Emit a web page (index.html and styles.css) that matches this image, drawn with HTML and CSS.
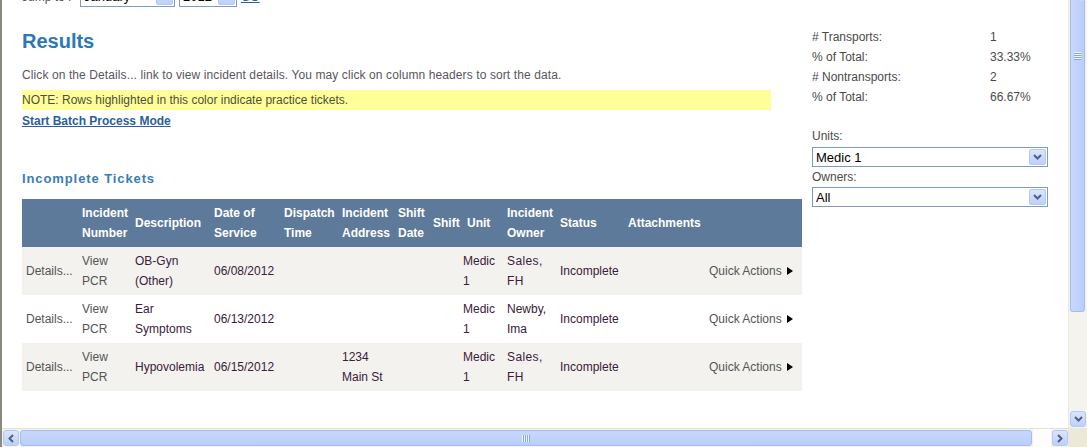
FILE: index.html
```html
<!DOCTYPE html>
<html>
    <head>
        <link rel="stylesheet" href="styles.css">
    </head>
    <body>
        <div class="window">
            <div class="viewport">
                <div class="page">
                    <div class="main">
                        <div class="jump">
                            <span class="jump-label">Jump to :</span>
                            <div class="select select-month">
                                <span class="select-text">January</span>
                                <span class="drop"><svg width="9" height="6" viewBox="0 0 9 6"><path d="M1 1 L4.5 4.5 L8 1" fill="none" stroke="#4d6185" stroke-width="2"/></svg></span>
                            </div>
                            <div class="select select-year">
                                <span class="select-text">2012</span>
                                <span class="drop"><svg width="9" height="6" viewBox="0 0 9 6"><path d="M1 1 L4.5 4.5 L8 1" fill="none" stroke="#4d6185" stroke-width="2"/></svg></span>
                            </div>
                            <a href="#" class="go">GO</a>
                        </div>

                        <h1 class="results-title">Results</h1>
                        <p class="hint">Click on the Details... link to view incident details. You may click on column headers to sort the data.</p>
                        <p class="note">NOTE: Rows highlighted in this color indicate practice tickets.</p>
                        <a href="#" class="batch-link">Start Batch Process Mode</a>

                        <h2 class="section-title">Incomplete Tickets</h2>
                        <table class="tickets">
                            <colgroup>
                                <col style="width: 58px">
                                <col style="width: 53px">
                                <col style="width: 79px">
                                <col style="width: 70px">
                                <col style="width: 58px">
                                <col style="width: 56px">
                                <col style="width: 35px">
                                <col style="width: 30px">
                                <col style="width: 44px">
                                <col style="width: 53px">
                                <col style="width: 68px">
                                <col style="width: 81px">
                                <col style="width: 95px">
                            </colgroup>
                            <thead>
                                <tr>
                                    <th></th>
                                    <th>Incident<br>Number</th>
                                    <th>Description</th>
                                    <th>Date of<br>Service</th>
                                    <th>Dispatch<br>Time</th>
                                    <th>Incident<br>Address</th>
                                    <th>Shift<br>Date</th>
                                    <th>Shift</th>
                                    <th class="unit-head">Unit</th>
                                    <th>Incident<br>Owner</th>
                                    <th>Status</th>
                                    <th>Attachments</th>
                                    <th></th>
                                </tr>
                            </thead>
                            <tbody>
                                <tr class="alt">
                                    <td class="muted first">Details...</td>
                                    <td class="muted">View<br>PCR</td>
                                    <td>OB-Gyn<br>(Other)</td>
                                    <td>06/08/2012</td>
                                    <td></td>
                                    <td></td>
                                    <td></td>
                                    <td></td>
                                    <td>Medic<br>1</td>
                                    <td class="owner">Sales,<br>FH</td>
                                    <td>Incomplete</td>
                                    <td></td>
                                    <td class="muted">Quick Actions <span class="arrow"></span></td>
                                </tr>
                                <tr>
                                    <td class="muted first">Details...</td>
                                    <td class="muted">View<br>PCR</td>
                                    <td>Ear<br>Symptoms</td>
                                    <td>06/13/2012</td>
                                    <td></td>
                                    <td></td>
                                    <td></td>
                                    <td></td>
                                    <td>Medic<br>1</td>
                                    <td>Newby,<br>Ima</td>
                                    <td>Incomplete</td>
                                    <td></td>
                                    <td class="muted">Quick Actions <span class="arrow"></span></td>
                                </tr>
                                <tr class="alt">
                                    <td class="muted first">Details...</td>
                                    <td class="muted">View<br>PCR</td>
                                    <td>Hypovolemia</td>
                                    <td>06/15/2012</td>
                                    <td></td>
                                    <td>1234<br>Main St</td>
                                    <td></td>
                                    <td></td>
                                    <td>Medic<br>1</td>
                                    <td class="owner">Sales,<br>FH</td>
                                    <td>Incomplete</td>
                                    <td></td>
                                    <td class="muted">Quick Actions <span class="arrow"></span></td>
                                </tr>
                            </tbody>
                        </table>
                    </div>

                    <div class="side">
                        <div class="stats stats-top">
                            <div class="stat-row"><span class="stat-label"># Runs:</span><span>3</span></div>
                        </div>
                        <div class="stats">
                            <div class="stat-row"><span class="stat-label"># Transports:</span><span>1</span></div>
                            <div class="stat-row"><span class="stat-label">% of Total:</span><span>33.33%</span></div>
                            <div class="stat-row"><span class="stat-label"># Nontransports:</span><span>2</span></div>
                            <div class="stat-row"><span class="stat-label">% of Total:</span><span>66.67%</span></div>
                        </div>

                        <div class="filter-label filter-first">Units:</div>
                        <div class="select select-wide">
                            <span class="select-text">Medic 1</span>
                            <span class="drop"><svg width="9" height="6" viewBox="0 0 9 6"><path d="M1 1 L4.5 4.5 L8 1" fill="none" stroke="#4d6185" stroke-width="2"/></svg></span>
                        </div>
                        <div class="filter-label">Owners:</div>
                        <div class="select select-wide">
                            <span class="select-text">All</span>
                            <span class="drop"><svg width="9" height="6" viewBox="0 0 9 6"><path d="M1 1 L4.5 4.5 L8 1" fill="none" stroke="#4d6185" stroke-width="2"/></svg></span>
                        </div>
                    </div>
                </div>

                <div class="vscroll">
                    <div class="vthumb"><span class="grip-h"></span></div>
                    <div class="vtrack"></div>
                    <div class="sbtn"><svg width="9" height="6" viewBox="0 0 9 6"><path d="M1 1 L4.5 4.5 L8 1" fill="none" stroke="#4d6185" stroke-width="2"/></svg></div>
                </div>
            </div>

            <div class="hbar">
                <div class="hscroll">
                    <div class="sbtn"><svg width="6" height="9" viewBox="0 0 6 9"><path d="M5 1 L1.5 4.5 L5 8" fill="none" stroke="#4d6185" stroke-width="2"/></svg></div>
                    <div class="hthumb"><span class="grip-v"></span></div>
                    <div class="htrack"></div>
                    <div class="sbtn"><svg width="6" height="9" viewBox="0 0 6 9"><path d="M1 1 L4.5 4.5 L1 8" fill="none" stroke="#4d6185" stroke-width="2"/></svg></div>
                </div>
                <div class="corner"></div>
            </div>
        </div>
    </body>
</html>
```

FILE: styles.css
```css
* {
    margin: 0;
    padding: 0;
    box-sizing: border-box;
}

body {
    font-family: 'Liberation Sans', Arial, sans-serif;
    font-size: 12px;
    color: #555;
    background: #fff;
    overflow: hidden;
}

.window {
    display: flex;
    flex-direction: column;
    width: 1087px;
    height: 447px;
    border-left: 2px solid #8c8a80;
}

.viewport {
    display: flex;
    height: 428px;
}

.page {
    flex: 1;
    display: flex;
    padding-left: 20px;
    overflow: hidden;
}

/* main column */

.main {
    width: 780px;
    flex-shrink: 0;
}

.jump {
    display: flex;
    align-items: center;
    height: 20px;
    margin-top: -13px;
    line-height: 20px;
}

.jump-label {
    width: 58px;
}

.select {
    position: relative;
    display: flex;
    align-items: center;
    height: 20px;
    border: 1px solid #7f9db9;
    background: #fff;
    color: #000;
    font-size: 13px;
}

.select-text {
    padding-left: 3px;
    flex: 1;
}

.drop {
    display: flex;
    align-items: center;
    justify-content: center;
    width: 17px;
    height: 16px;
    margin-right: 1px;
    border: 1px solid #b3c8f5;
    border-radius: 2px;
    background: linear-gradient(#dbe6fd, #bdd0fa);
}

.select-month {
    width: 95px;
}

.select-year {
    width: 58px;
    margin-left: 4px;
}

.go {
    margin-left: 4px;
    color: #2a5f9e;
}

.results-title {
    margin-top: 22px;
    font-size: 20px;
    line-height: 24px;
    font-weight: bold;
    color: #2b78b8;
}

.hint {
    margin-top: 14px;
    line-height: 16px;
    color: #5a5560;
    letter-spacing: 0.1px;
}

.note {
    margin-top: 7px;
    width: 749px;
    height: 20px;
    line-height: 20px;
    background: #ffff99;
    color: #4f4f3a;
}

.batch-link {
    display: inline-block;
    margin-top: 3px;
    line-height: 16px;
    color: #2a5f9e;
    font-weight: bold;
    font-size: 12px;
}

.section-title {
    margin-top: 42px;
    font-size: 13px;
    line-height: 16px;
    font-weight: bold;
    color: #3a7cb5;
    letter-spacing: 0.9px;
}

.tickets {
    margin-top: 12px;
    width: 780px;
    table-layout: fixed;
    border-collapse: collapse;
}

.tickets th,
.tickets td {
    padding: 4px 2px;
    line-height: 20px;
    text-align: left;
    vertical-align: middle;
    white-space: nowrap;
    overflow: hidden;
}

.tickets th {
    height: 48px;
    background: #5e7a9b;
    color: #fff;
    font-weight: bold;
}

.tickets th.unit-head {
    padding-left: 6px;
}

.tickets td {
    height: 48px;
    color: #3a203a;
}

.tickets tr.alt td {
    background: #f3f2ee;
}

.tickets td.muted {
    color: #555;
}

.tickets td.first {
    padding-left: 4px;
}

.tickets td.owner {
    letter-spacing: 0.4px;
}

.arrow {
    display: inline-block;
    width: 0;
    height: 0;
    margin-left: 2px;
    border-top: 4.5px solid transparent;
    border-bottom: 4.5px solid transparent;
    border-left: 6px solid #000;
}

/* side column */

.side {
    width: 236px;
    margin-left: 10px;
    flex-shrink: 0;
    color: #4a4a4a;
}

.stats-top {
    margin-top: -16px;
    margin-bottom: 23px;
}

.stat-row {
    display: flex;
    line-height: 20px;
}

.stat-label {
    width: 178px;
}

.filter-label {
    margin-top: 2px;
    line-height: 16px;
}

.filter-first {
    margin-top: 21px;
}

.select-wide {
    width: 236px;
    margin-top: 2px;
}

.filter-first + .select-wide {
    margin-top: 3px;
}

/* scrollbars */

.vscroll {
    display: flex;
    flex-direction: column;
    width: 19px;
    padding: 0 2px 1px 1px;
    background: #f4f3ee;
    border-left: 1px solid #ece9d8;
}

.vthumb {
    display: flex;
    align-items: center;
    justify-content: center;
    height: 312px;
    border: 1px solid #a6bcf0;
    border-top-color: #c5d6fb;
    border-radius: 0 0 3px 3px;
    background: linear-gradient(90deg, #c8d8fc, #b9cefa);
    padding-bottom: 200px;
}

.vtrack {
    flex: 1;
}

.sbtn {
    display: flex;
    align-items: center;
    justify-content: center;
    width: 16px;
    height: 16px;
    border: 1px solid #b3c8f5;
    border-radius: 3px;
    background: linear-gradient(#dbe6fd, #bdd0fa);
    flex-shrink: 0;
}

.grip-h {
    width: 7px;
    height: 8px;
    background: repeating-linear-gradient(#eef3fe 0, #eef3fe 1px, #8ca7e0 1px, #8ca7e0 2px);
}

.hbar {
    display: flex;
    height: 19px;
    background: #f4f3ee;
}

.hscroll {
    flex: 1;
    display: flex;
    align-items: center;
    padding-left: 1px;
    gap: 1px;
    border-top: 1px solid #e4e2d8;
}

.hthumb {
    display: flex;
    align-items: center;
    justify-content: center;
    width: 1012px;
    height: 16px;
    border: 1px solid #a6bcf0;
    border-radius: 3px;
    background: linear-gradient(#c8d8fc, #b9cefa);
}

.htrack {
    flex: 1;
    align-self: stretch;
    background: #fdfdfb;
}

.grip-v {
    width: 8px;
    height: 7px;
    background: repeating-linear-gradient(90deg, #eef3fe 0, #eef3fe 1px, #8ca7e0 1px, #8ca7e0 2px);
}

.corner {
    width: 19px;
    background: #ece9d8;
}
```
